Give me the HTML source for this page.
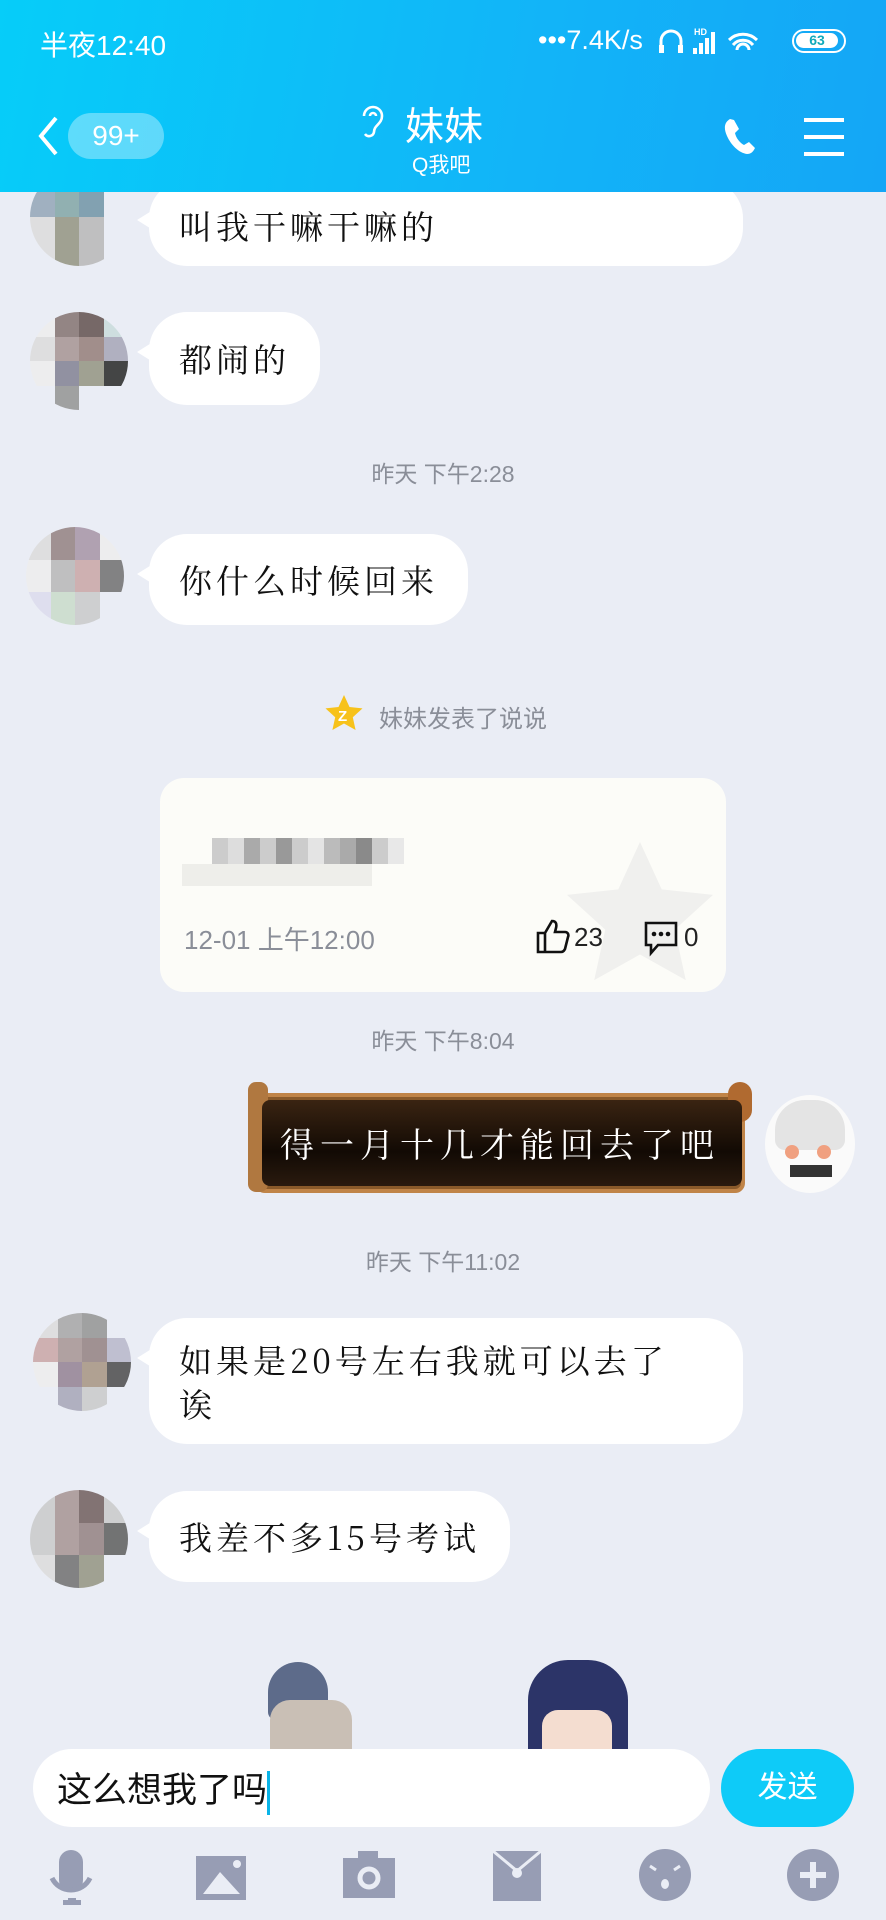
<!DOCTYPE html>
<html><head><meta charset="utf-8"><style>
*{margin:0;padding:0;box-sizing:border-box}
body{width:886px;height:1920px;background:#eaedf5;position:relative;overflow:hidden;font-family:"Liberation Sans","Noto Sans CJK SC",sans-serif}
.hdr{position:absolute;left:0;top:0;width:886px;height:192px;background:linear-gradient(100deg,#06cdf9 0%,#12b4f8 60%,#14a6f6 100%);color:#fff;z-index:5}
.abs{position:absolute}
.bub{position:absolute;background:#fff;border-radius:38px;font-family:"Noto Serif CJK SC","Liberation Serif",serif;font-size:33px;color:#111;padding:0 30px;letter-spacing:4px}
.bub:before{content:"";position:absolute;left:-12px;top:30px;border-right:16px solid #fff;border-top:10px solid transparent;border-bottom:10px solid transparent}
.ts{position:absolute;left:0;width:886px;text-align:center;font-size:23px;color:#8a8e98}
.av{position:absolute;width:98px;height:98px;border-radius:50%;overflow:hidden;display:grid;grid-template-columns:repeat(4,1fr);opacity:.9}
.av i{display:block}
</style></head><body>
<div class="hdr">
 <div class="abs" style="left:40px;top:24px;font-size:28px">半夜12:40</div>
 <div class="abs" style="left:538px;top:25px;font-size:27px">•••7.4K/s</div>
 <svg class="abs" style="left:657px;top:26px" width="130" height="32" viewBox="0 0 130 32"><path d="M4 26V15a10 10 0 0 1 20 0v11" stroke="#fff" stroke-width="3" fill="none"/><rect x="2" y="19" width="5" height="8" fill="#fff"/><rect x="21" y="19" width="5" height="8" fill="#fff"/><text x="37" y="9" font-size="9" fill="#fff" font-family="Liberation Sans" font-weight="bold">HD</text><rect x="36" y="22" width="4" height="6" fill="#fff"/><rect x="42" y="17" width="4" height="11" fill="#fff"/><rect x="48" y="12" width="4" height="16" fill="#fff"/><rect x="54" y="6" width="4" height="22" fill="#fff"/><path d="M72 14a20 20 0 0 1 28 0M76 19a13 13 0 0 1 20 0M80 24a6 6 0 0 1 12 0" stroke="#fff" stroke-width="3" fill="none"/></svg>
 <div class="abs" style="left:792px;top:29px;width:54px;height:24px;border:2.5px solid #fff;border-radius:12px"><div style="margin:2px;height:15px;width:42px;background:#fff;border-radius:8px;color:#1ab;font-size:14px;text-align:center;line-height:15px;font-weight:bold">63</div></div>
 <svg class="abs" style="left:36px;top:115px" width="24" height="42" viewBox="0 0 24 42"><path d="M20 3L5 21l15 18" stroke="#fff" stroke-width="4" fill="none"/></svg>
 <div class="abs" style="left:68px;top:113px;width:96px;height:46px;border-radius:23px;background:rgba(255,255,255,.35);font-size:28px;text-align:center;line-height:46px">99+</div>
 <svg class="abs" style="left:358px;top:102px" width="30" height="40" viewBox="0 0 30 40"><path d="M6 14a9 9 0 0 1 18 0c0 8-8 9-8 16a5 5 0 0 1-9 2M12 14a3 3 0 0 1 6 0" stroke="#fff" stroke-width="2.6" fill="none"/></svg>
 <div class="abs" style="left:405px;top:96px;font-size:39px">妹妹</div>
 <div class="abs" style="left:412px;top:149px;font-size:21px">Q我吧</div>
 <svg class="abs" style="left:722px;top:116px" width="36" height="40" viewBox="0 0 36 40"><path d="M8 3c-5 3-7 8-3 17s12 17 20 18c4 0 6-2 8-6l-6-6-5 3c-4-2-8-7-9-12l4-4L12 4z" fill="#fff"/></svg>
 <div class="abs" style="left:804px;top:118px;width:40px;height:4px;background:#fff;box-shadow:0 17px 0 #fff,0 34px 0 #fff"></div>
</div>

<div class="av" style="left:30px;top:168px;"><i style="background:#9ab"></i><i style="background:#8aa"></i><i style="background:#79a"></i><i></i><i style="background:#ddd"></i><i style="background:#998"></i><i style="background:#bbb"></i><i></i></div>
<div class="bub" style="left:149px;top:180px;width:594px;height:86px"><div style="position:absolute;top:22px;left:30px">叫我干嘛干嘛的</div></div>

<div class="av" style="left:30px;top:312px"><i style="background:#eee"></i><i style="background:#8a7a78"></i><i style="background:#6a5a58"></i><i style="background:#cdd"></i><i style="background:#ddd"></i><i style="background:#a99"></i><i style="background:#9a8480"></i><i style="background:#aab"></i><i style="background:#eee"></i><i style="background:#889"></i><i style="background:#998"></i><i style="background:#333"></i><i></i><i style="background:#999"></i><i></i><i></i></div>
<div class="bub" style="left:149px;top:312px;height:93px;line-height:93px">都闹的</div>

<div class="ts" style="top:455px">昨天 下午2:28</div>
<div class="av" style="left:26px;top:527px"><i style="background:#ddd"></i><i style="background:#988"></i><i style="background:#a9a"></i><i style="background:#eee"></i><i style="background:#eee"></i><i style="background:#bbb"></i><i style="background:#caa"></i><i style="background:#777"></i><i style="background:#dde"></i><i style="background:#cdc"></i><i style="background:#ccc"></i><i></i></div>
<div class="bub" style="left:149px;top:534px;height:91px;line-height:91px">你什么时候回来</div>

<svg class="abs" style="left:324px;top:694px" width="40" height="38" viewBox="0 0 40 38"><path d="M20 1l5.5 12 13 1.4-9.7 8.8 2.8 12.8L20 29.5 8.4 36l2.8-12.8L1.5 14.4l13-1.4z" fill="#f7c21a"/><text x="14" y="27" font-size="15" fill="#fff" font-weight="bold">Z</text></svg>
<div class="ts" style="top:699px;font-size:24px;padding-left:40px">妹妹发表了说说</div>

<div class="abs" style="left:160px;top:778px;width:566px;height:214px;background:#fcfcf8;border-radius:24px;overflow:hidden">
 <svg class="abs" style="left:400px;top:60px" width="160" height="150" viewBox="0 0 40 38"><path d="M20 1l5.5 12 13 1.4-9.7 8.8 2.8 12.8L20 29.5 8.4 36l2.8-12.8L1.5 14.4l13-1.4z" fill="#f0f0ee"/></svg>
 <div class="abs" style="left:22px;top:60px;display:flex"><div style="width:30px;height:26px"></div><div style="width:16px;height:26px;background:#ccc"></div><div style="width:16px;height:26px;background:#ddd"></div><div style="width:16px;height:26px;background:#aaa"></div><div style="width:16px;height:26px;background:#ccc"></div><div style="width:16px;height:26px;background:#999"></div><div style="width:16px;height:26px;background:#ccc"></div><div style="width:16px;height:26px;background:#e4e4e4"></div><div style="width:16px;height:26px;background:#bbb"></div><div style="width:16px;height:26px;background:#aaa"></div><div style="width:16px;height:26px;background:#8a8a8a"></div><div style="width:16px;height:26px;background:#ccc"></div><div style="width:16px;height:26px;background:#e8e8e8"></div></div>
 <div class="abs" style="left:22px;top:86px;width:190px;height:22px;background:#eeeeea"></div>
 <div class="abs" style="left:-10px;top:142px;padding-left:34px;font-size:26px;color:#8a8e98">12-01 上午12:00</div>
 <svg class="abs" style="left:376px;top:140px" width="34" height="36" viewBox="0 0 34 36"><path d="M2 15h7v19H2zM9 15l7-12c4 0 5 3 4 7l-1 4h10c3 0 4 3 3 5l-3 12c-1 2-2 3-4 3H9" stroke="#111" stroke-width="2.6" fill="none"/></svg>
 <div class="abs" style="left:414px;top:144px;font-size:26px;color:#222">23</div>
 <svg class="abs" style="left:484px;top:143px" width="34" height="36" viewBox="0 0 34 36"><path d="M2 2h30v22H14l-7 8v-8H2z" stroke="#111" stroke-width="2.6" fill="none"/><circle cx="10" cy="13" r="2.3" fill="#111"/><circle cx="17" cy="13" r="2.3" fill="#111"/><circle cx="24" cy="13" r="2.3" fill="#111"/></svg>
 <div class="abs" style="left:524px;top:144px;font-size:26px;color:#222">0</div>
</div>

<div class="ts" style="top:1022px">昨天 下午8:04</div>
<div class="abs" style="left:255px;top:1093px;width:490px;height:100px;background:#8a5a2a;border-radius:10px;border:4px solid #c08448"></div>
<div class="abs" style="left:248px;top:1082px;width:20px;height:110px;background:#b07840;border-radius:8px"></div>
<div class="abs" style="left:728px;top:1082px;width:24px;height:40px;background:#b06a30;border-radius:12px"></div>
<div class="abs" style="left:262px;top:1100px;width:480px;height:86px;background:linear-gradient(#3a2412,#120a04 60%,#2a1a0e);border-radius:8px;color:#fff;font-family:'Noto Serif CJK SC',serif;font-size:34px;line-height:86px;padding-left:18px;letter-spacing:6px">得一月十几才能回去了吧</div>
<div class="abs" style="left:765px;top:1095px;width:90px;height:98px;border-radius:50%;background:#fafafa;overflow:hidden"><div style="position:absolute;left:10px;top:5px;width:70px;height:50px;background:#e4e4e4;border-radius:30px 30px 10px 10px"></div><div style="position:absolute;left:20px;top:50px;width:14px;height:14px;background:#f0a080;border-radius:50%"></div><div style="position:absolute;left:52px;top:50px;width:14px;height:14px;background:#f0a080;border-radius:50%"></div><div style="position:absolute;left:25px;top:70px;width:42px;height:12px;background:#333"></div></div>

<div class="ts" style="top:1243px">昨天 下午11:02</div>
<div class="av" style="left:33px;top:1313px"><i style="background:#ddd"></i><i style="background:#aaa"></i><i style="background:#999"></i><i></i><i style="background:#caa"></i><i style="background:#a99"></i><i style="background:#988"></i><i style="background:#bbc"></i><i style="background:#eee"></i><i style="background:#989"></i><i style="background:#a98"></i><i style="background:#555"></i><i></i><i style="background:#aab"></i><i style="background:#ccc"></i><i></i></div>
<div class="bub" style="left:149px;top:1318px;width:594px;height:126px;line-height:44px;padding-top:20px">如果是20号左右我就可以去了<br>诶</div>

<div class="av" style="left:30px;top:1490px"><i style="background:#ccc"></i><i style="background:#a99"></i><i style="background:#766"></i><i style="background:#ccc"></i><i style="background:#ccc"></i><i style="background:#a99"></i><i style="background:#988"></i><i style="background:#666"></i><i style="background:#ddd"></i><i style="background:#777"></i><i style="background:#998"></i><i></i></div>
<div class="bub" style="left:149px;top:1491px;height:91px;line-height:91px">我差不多15号考试</div>

<div class="abs" style="left:268px;top:1662px;width:60px;height:58px;background:#5d6b8a;border-radius:30px 30px 8px 8px"></div>
<div class="abs" style="left:270px;top:1700px;width:82px;height:50px;background:#c9bfb5;border-radius:20px 20px 0 0"></div>
<div class="abs" style="left:528px;top:1660px;width:100px;height:90px;background:#2c3468;border-radius:40px 40px 0 0"></div>
<div class="abs" style="left:542px;top:1710px;width:70px;height:40px;background:#f4ddd0;border-radius:16px 16px 0 0"></div>

<div class="abs" style="left:33px;top:1749px;width:677px;height:78px;background:#fff;border-radius:39px;font-size:35px;line-height:78px;padding-left:24px;color:#111;font-family:'Noto Sans CJK SC',sans-serif">这么想我了吗<span style="display:inline-block;width:3px;height:44px;background:#0ab4e8;vertical-align:middle"></span></div>
<div class="abs" style="left:721px;top:1749px;width:133px;height:78px;background:#0ecbf8;border-radius:39px;color:#fff;font-size:30px;text-align:center;line-height:78px">发送</div>

<svg class="abs" style="left:0;top:1840px" width="886" height="70" viewBox="0 0 886 70">
<g fill="#979db4">
<rect x="59" y="10" width="24" height="42" rx="12"/><path d="M52 38a21 21 0 0 0 38 0" stroke="#979db4" stroke-width="5" fill="none"/><rect x="68" y="58" width="8" height="6"/><rect x="63" y="60" width="18" height="5"/>
<rect x="196" y="16" width="50" height="44"/>
<rect x="343" y="18" width="52" height="40"/><rect x="358" y="11" width="20" height="8"/>
<rect x="493" y="11" width="48" height="50"/>
<circle cx="665" cy="35" r="26"/>
<circle cx="813" cy="35" r="26"/>
</g>
<path d="M203 54l17-22 20 22z" fill="#eaedf5"/><circle cx="237" cy="24" r="4" fill="#eaedf5"/>
<circle cx="369" cy="38" r="9" stroke="#eaedf5" stroke-width="5" fill="none"/>
<path d="M493 11l24 20 24-20" stroke="#eaedf5" stroke-width="3" fill="none"/><circle cx="517" cy="33" r="5" fill="#eaedf5"/>
<path d="M650 26l6 4M680 26l-6 4" stroke="#eaedf5" stroke-width="3"/><ellipse cx="665" cy="44" rx="4" ry="5" fill="#eaedf5"/>
<path d="M813 22v26M800 35h26" stroke="#eaedf5" stroke-width="6"/>
</svg>
</body></html>
